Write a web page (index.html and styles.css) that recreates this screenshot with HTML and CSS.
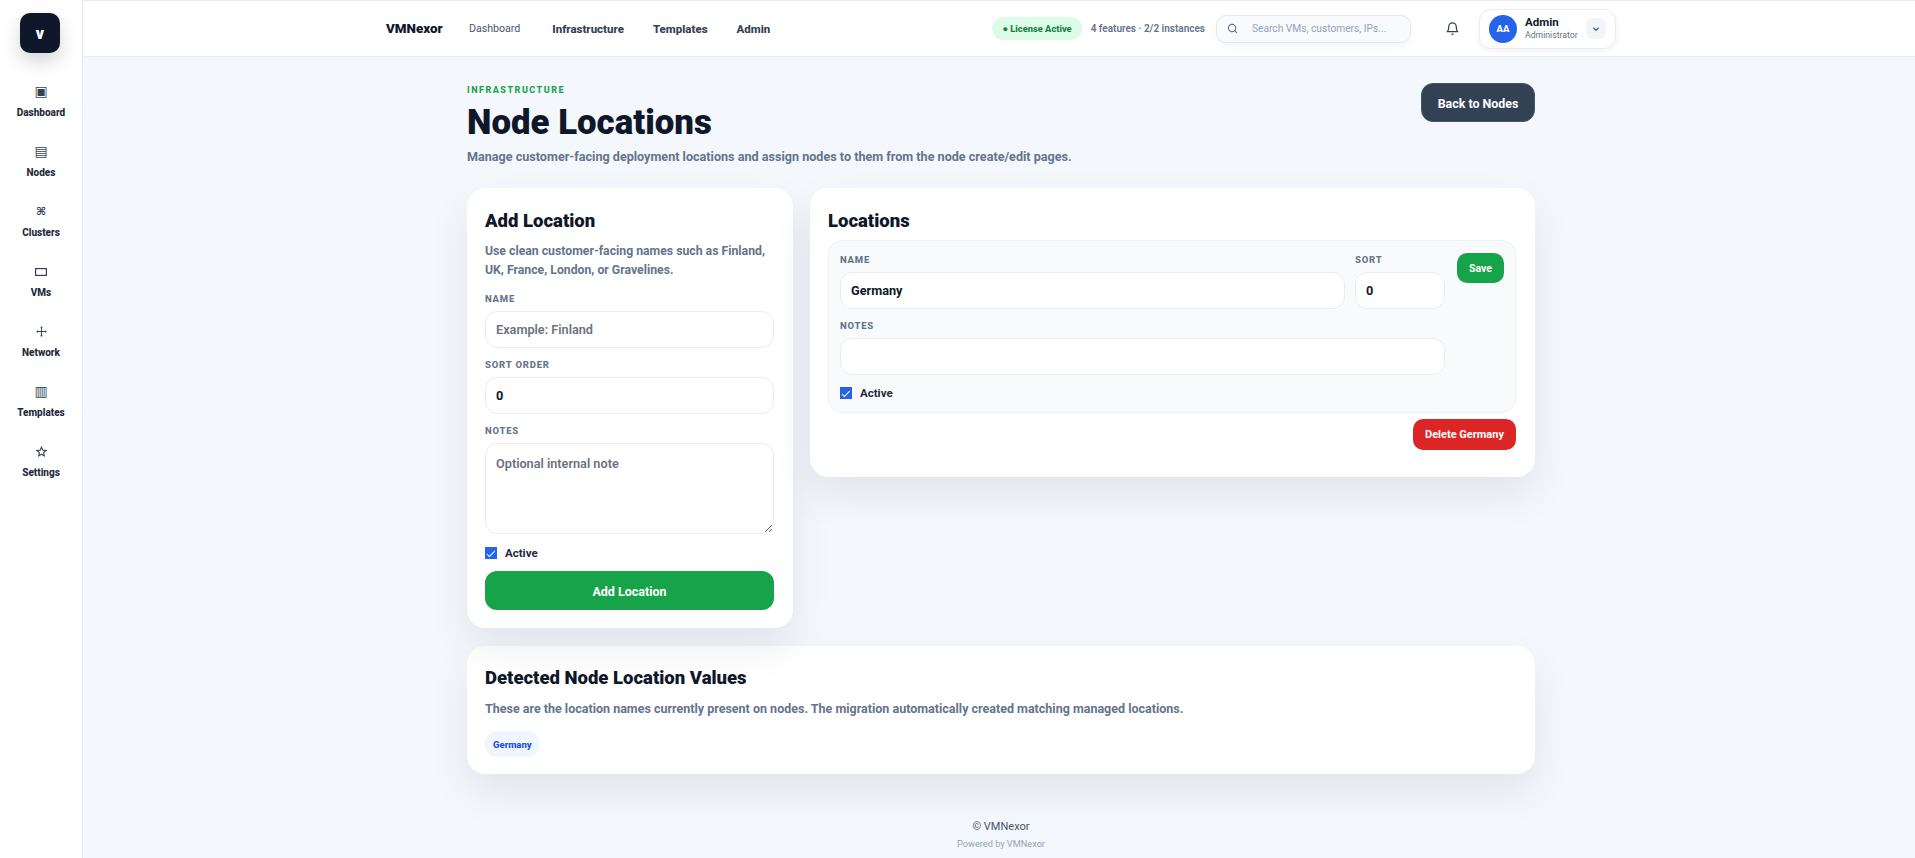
FILE: index.html
```html
<!DOCTYPE html>
<html lang="en">
<head>
  <meta charset="UTF-8">
  <title>Node Locations - VMNexor</title>
  <link rel="stylesheet" href="styles.css">
</head>
<body>
  <aside class="sidebar">
    <div class="logo">v</div>
    <nav class="side-nav">
      <a class="side-link"><span class="side-icon">▣</span><span>Dashboard</span></a>
      <a class="side-link"><span class="side-icon">▤</span><span>Nodes</span></a>
      <a class="side-link"><span class="side-icon cmd">⌘</span><span>Clusters</span></a>
      <a class="side-link"><span class="side-icon">
        <svg width="12" height="8" viewBox="0 0 12 8" fill="none" stroke="#334155" stroke-width="1.2"><rect x=".6" y=".6" width="10.8" height="6.8"/></svg>
      </span><span>VMs</span></a>
      <a class="side-link"><span class="side-icon">
        <svg width="11" height="11" viewBox="0 0 12 12" fill="#334155"><path d="M5.5 1.5h1v9h-1zM1.5 5.5h9v1h-9z"/><circle cx="6" cy="1.5" r="1"/><circle cx="6" cy="10.5" r="1"/><circle cx="1.5" cy="6" r="1"/><circle cx="10.5" cy="6" r="1"/></svg>
      </span><span>Network</span></a>
      <a class="side-link"><span class="side-icon">▥</span><span>Templates</span></a>
      <a class="side-link"><span class="side-icon">
        <svg width="11" height="11" viewBox="0 0 24 24" fill="none" stroke="#334155" stroke-width="2.4" stroke-linejoin="miter"><path d="M12 2.5l2.9 6.6 7.1.7-5.4 4.7 1.6 7-6.2-3.7-6.2 3.7 1.6-7L2 9.8l7.1-.7z"/></svg>
      </span><span>Settings</span></a>
    </nav>
  </aside>

  <div class="page">
    <header class="topbar">
      <div class="top-left">
        <span class="brand">VMNexor</span>
        <a class="top-link plain">Dashboard</a>
        <a class="top-link">Infrastructure</a>
        <a class="top-link">Templates</a>
        <a class="top-link">Admin</a>
      </div>
      <div class="top-right">
        <span class="license">● License Active</span>
        <span class="license-info">4 features · 2/2 instances</span>
        <div class="search">
          <svg width="11" height="11" viewBox="0 0 24 24" fill="none" stroke="#64748b" stroke-width="2.4" stroke-linecap="round"><circle cx="11" cy="11" r="8"/><path d="M21 21l-4.3-4.3"/></svg>
          <span>Search VMs, customers, IPs...</span>
        </div>
        <svg class="bell" width="15" height="17" viewBox="0 0 24 24" fill="none" stroke="#334155" stroke-width="2" stroke-linecap="round" stroke-linejoin="round"><path d="M6 9a6 6 0 0 1 12 0c0 6 2.5 8 2.5 8h-17S6 15 6 9"/><path d="M11 21h2"/></svg>
        <div class="user">
          <span class="avatar">AA</span>
          <div class="user-text">
            <strong>Admin</strong>
            <small>Administrator</small>
          </div>
          <span class="chev">
            <svg width="8" height="8" viewBox="0 0 24 24" fill="none" stroke="#475569" stroke-width="3.5" stroke-linecap="round" stroke-linejoin="round"><path d="M5 9l7 7 7-7"/></svg>
          </span>
        </div>
      </div>
    </header>

    <main class="content">
      <div class="page-head">
        <div>
          <div class="eyebrow">INFRASTRUCTURE</div>
          <h1>Node Locations</h1>
          <p class="sub">Manage customer-facing deployment locations and assign nodes to them from the node create/edit pages.</p>
        </div>
        <a class="btn btn-dark">Back to Nodes</a>
      </div>

      <div class="columns">
        <section class="card add-card">
          <h2>Add Location</h2>
          <p class="muted">Use clean customer-facing names such as Finland, UK, France, London, or Gravelines.</p>
          <label class="field-label first">NAME</label>
          <input class="input" type="text" placeholder="Example: Finland">
          <label class="field-label">SORT ORDER</label>
          <input class="input" type="text" value="0">
          <label class="field-label">NOTES</label>
          <textarea class="input area" placeholder="Optional internal note"></textarea>
          <label class="check"><input type="checkbox" checked> Active</label>
          <a class="btn btn-green btn-wide">Add Location</a>
        </section>

        <section class="card list-card">
          <h2>Locations</h2>
          <div class="loc-row">
            <div class="loc-grid">
              <div class="loc-name">
                <label class="field-label">NAME</label>
                <input class="input" type="text" value="Germany">
              </div>
              <div class="loc-sort">
                <label class="field-label">SORT</label>
                <input class="input" type="text" value="0">
              </div>
              <a class="btn btn-green btn-small">Save</a>
              <div class="loc-notes">
                <label class="field-label">NOTES</label>
                <input class="input" type="text">
              </div>
            </div>
            <label class="check"><input type="checkbox" checked> Active</label>
          </div>
          <div class="row-end"><a class="btn btn-red">Delete Germany</a></div>
        </section>
      </div>

      <section class="card detected">
        <h2>Detected Node Location Values</h2>
        <p class="muted">These are the location names currently present on nodes. The migration automatically created matching managed locations.</p>
        <span class="chip">Germany</span>
      </section>

      <footer class="footer">
        <div>© VMNexor</div>
        <small>Powered by VMNexor</small>
      </footer>
    </main>
  </div>
</body>
</html>
```

FILE: styles.css
```css
* { box-sizing: border-box; }
html, body { height: 100%; }
body { margin: 0; display: flex; background: #f4f7fc; color: #0f172a; font-family: Roboto, Arial, sans-serif; overflow: hidden; }
a { text-decoration: none; color: inherit; }

.sidebar { width: 83px; flex: none; background: #fff; border-right: 1px solid #e8edf4; padding-top: 13px; }
.logo { width: 40px; height: 40px; margin-left: 20px; border-radius: 10px; background: #0f172a; color: #fff; font-size: 16px; font-weight: 900; display: flex; align-items: center; justify-content: center; box-shadow: 0 8px 18px rgba(15, 23, 42, .18); }
.side-nav { margin-top: 20px; display: flex; flex-direction: column; }
.side-link { height: 60px; display: flex; flex-direction: column; align-items: center; gap: 7px; color: #1e293b; font-size: 10px; font-weight: 800; padding-top: 10px; }
.side-icon { height: 17px; display: flex; align-items: center; font-size: 14px; line-height: 17px; color: #334155; font-family: "DejaVu Sans", sans-serif; font-weight: 400; }
.side-icon.cmd { font-size: 11px; font-weight: 700; }

.page { flex: 1; min-width: 0; }
.topbar { height: 57px; background: #fff; border-top: 1px solid #e8ebf0; border-bottom: 1px solid #e8edf4; display: flex; align-items: center; padding-left: 303px; padding-right: 299px; justify-content: space-between; }
.top-left, .top-right { display: flex; align-items: center; }
.brand { width: 83px; font-size: 13.4px; font-weight: 900; color: #0f172a; }
.top-link { font-size: 11.5px; font-weight: 800; color: #334155; margin-right: 29px; }
.top-link.plain { font-size: 10.6px; font-weight: 400; color: #475569; margin-right: 32px; }
.license { height: 23px; padding: 0 10px; border-radius: 12px; background: #dcfce7; color: #15803d; font-size: 9.3px; font-weight: 800; display: flex; align-items: center; }
.license-info { margin-left: 9px; font-size: 10px; font-weight: 600; color: #64748b; }
.search { width: 195px; height: 28px; margin-left: 11px; padding-left: 10px; background: #f8fafc; border: 1px solid #e2e8f0; border-radius: 10px; display: flex; align-items: center; gap: 14px; font-size: 10.2px; color: #94a3b8; box-shadow: 0 4px 10px rgba(15, 23, 42, .04); }
.bell { margin-left: 34px; }
.user { width: 137px; height: 40px; margin-left: 19px; padding: 0 9px; border: 1px solid #e8edf4; border-radius: 12px; background: #fff; display: flex; align-items: center; box-shadow: 0 2px 6px rgba(15, 23, 42, .05); }
.avatar { width: 28px; height: 28px; border-radius: 50%; background: #2563eb; color: #fff; font-size: 9.5px; font-weight: 800; display: flex; align-items: center; justify-content: center; }
.user-text { margin-left: 8px; flex: 1; display: flex; flex-direction: column; line-height: 13px; }
.user-text strong { font-size: 11.5px; font-weight: 700; color: #0f172a; }
.user-text small { font-size: 8.7px; color: #64748b; }
.chev { width: 20px; height: 21px; border-radius: 6px; background: #f1f5f9; display: flex; align-items: center; justify-content: center; }

.content { width: 1068px; margin-left: 384px; }
.page-head { display: flex; justify-content: space-between; align-items: flex-start; padding-top: 26px; height: 131px; }
.eyebrow { font-size: 9px; font-weight: 800; letter-spacing: 1.5px; color: #16a34a; line-height: 14px; }
h1 { margin: 3px 0 0; font-size: 34.8px; line-height: 44px; font-weight: 900; color: #0f172a; }
.sub { margin: 4px 0 0; font-size: 12.6px; line-height: 18px; font-weight: 700; color: #64748b; }
.btn { display: flex; align-items: center; justify-content: center; color: #fff; font-weight: 700; }
.btn-dark { width: 114px; height: 39px; padding-top: 1px; border-radius: 12px; background: #334155; font-size: 12.4px; border: 1px solid #475569; }
.btn-green { background: #16a34a; }
.btn-wide { height: 39px; padding-top: 1px; border-radius: 12px; font-size: 12.5px; margin-top: 11px; }
.btn-small { width: 47px; height: 30px; border-radius: 10px; font-size: 10.5px; }
.btn-red { width: 103px; height: 31px; border-radius: 10px; background: #dc2626; font-size: 11px; }

.columns { display: grid; grid-template-columns: 326px 725px; gap: 17px; align-items: start; }
.card { background: #fff; border: 1px solid #fff; border-radius: 18px; box-shadow: 0 18px 40px rgba(15, 23, 42, .08); padding: 18px 18px 18px 17px; }
.add-card { padding-bottom: 17px; }
h2 { margin: 0; font-size: 18.5px; line-height: 28px; font-weight: 900; color: #0f172a; }
.muted { margin: 7px 0 0; font-size: 12.25px; line-height: 19px; font-weight: 700; color: #64748b; }
.field-label { display: block; font-size: 9.5px; line-height: 12px; font-weight: 800; letter-spacing: .8px; color: #64748b; margin: 11px 0 6px; }
.field-label.first { margin-top: 13px; }
.input { display: block; width: 100%; height: 37px; padding: 0 10px; background: #fff; border: 1px solid #e8edf4; border-radius: 12px; font: 700 12.7px Roboto, Arial, sans-serif; color: #0f172a; outline: none; }
.input::placeholder { color: #6b7280; font-weight: 600; }
.area { height: 91px; padding-top: 12px; resize: vertical; }
.check { display: flex; align-items: center; gap: 8px; font-size: 11.5px; font-weight: 700; color: #1e293b; margin-top: 12px; }
.check input { appearance: none; position: relative; width: 12px; height: 12px; margin: 0; background: #2563eb; }
.check input::after { content: ""; position: absolute; left: 4px; top: 1.5px; width: 3px; height: 6.5px; border: solid #fff; border-width: 0 1.5px 1.5px 0; transform: rotate(45deg); }

.list-card { height: 289px; }
.loc-row { margin-top: 5px; height: 173px; padding: 13px 11px; background: #f8fafc; border: 1px solid #eef2f7; border-radius: 14px; }
.loc-grid { display: grid; grid-template-columns: 505px 90px 47px; column-gap: 10px; row-gap: 0; }
.loc-grid .field-label { margin-top: 0; }
.loc-grid .btn-small { margin-left: 2px; margin-top: -1px; }
.loc-notes { grid-column: 1 / 3; margin-top: 11px; }
.loc-row .check { margin-top: 11px; }
.row-end { display: flex; justify-content: flex-end; margin-top: 6px; }

.detected { margin-top: 18px; height: 128px; }
.detected h2 { line-height: 26px; }
.detected .muted { margin-top: 8px; font-size: 12.5px; }
.chip { display: inline-flex; align-items: center; height: 26px; margin-top: 13px; padding: 0 8px; border-radius: 13px; background: #eff6ff; color: #1d4ed8; font-size: 9.5px; font-weight: 800; }

.footer { margin-top: 45px; text-align: center; font-size: 11px; line-height: 16px; color: #475569; }
.footer small { display: block; font-size: 9.2px; color: #94a3b8; margin-top: 1px; }
```
